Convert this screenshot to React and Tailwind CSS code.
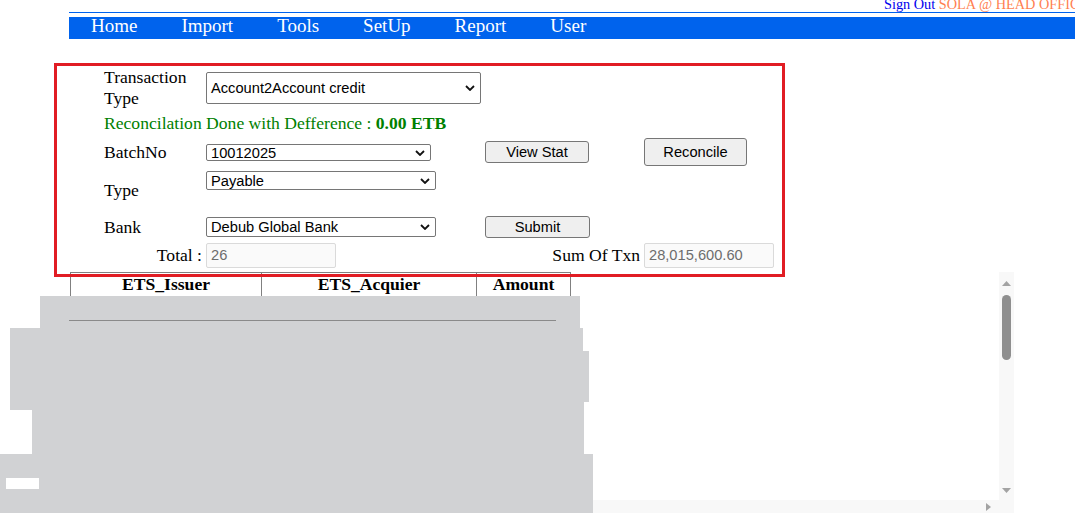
import React from 'react';

const Chevron = () => (
  <svg width="10" height="6" viewBox="0 0 10 6" className="shrink-0">
    <path d="M1 1l4 4 4-4" fill="none" stroke="#111" strokeWidth="1.8" />
  </svg>
);

const FakeSelect = ({ value, className }) => (
  <div
    className={`flex items-center justify-between border border-[#767676] rounded-[2px] bg-white pl-[4px] pr-[5px] font-['Liberation_Sans',sans-serif] text-[14.67px] leading-[16px] text-black ${className}`}
  >
    <span className="whitespace-nowrap">{value}</span>
    <Chevron />
  </div>
);

const Btn = ({ children, className }) => (
  <button
    className={`flex items-center justify-center border border-[#767676] rounded-[3px] bg-[#efefef] font-['Liberation_Sans',sans-serif] text-[14.67px] leading-[16px] text-black ${className}`}
  >
    {children}
  </button>
);

const ReadOnly = ({ value }) => (
  <div className="flex items-center w-[130px] h-[25px] border border-[#dadada] rounded-[2px] bg-[#fafafa] pl-[4px] font-['Liberation_Sans',sans-serif] text-[14.67px] text-[#6d6d6d]">
    {value}
  </div>
);

const navItems = ['Home', 'Import', 'Tools', 'SetUp', 'Report', 'User'];

export default function App() {
  return (
    <div className="relative w-[1075px] h-[522px] overflow-hidden bg-white font-['Liberation_Serif',serif] text-black">
      {/* Header */}
      <div className="h-[12px] pl-[884px] whitespace-nowrap text-[14.3px] leading-[8px]">
        <span className="text-[#0000ee]">Sign Out</span>{' '}
        <span className="text-[#ff7f50]">SOLA @ HEAD OFFICE</span>
      </div>
      <div className="ml-[69px] h-px bg-[#0063ed]" />
      <nav className="ml-[69px] mt-[4px] h-[22px] bg-[#0063ed] flex">
        {navItems.map((item) => (
          <span key={item} className="px-[22px] text-white text-[19px] leading-[18px]">
            {item}
          </span>
        ))}
      </nav>

      {/* Form */}
      <div className="pl-[104px] pt-[27px] text-[17.6px] leading-[21px]">
        <div className="flex items-center h-[43px]">
          <div className="w-[102px]">Transaction Type</div>
          <FakeSelect value="Account2Account credit" className="w-[275px] h-[32px]" />
        </div>

        <div className="mt-[4px] h-[21px] text-[#008000] whitespace-nowrap">
          Reconcilation Done with Defference : <b>0.00 ETB</b>
        </div>

        <div className="mt-[4px] flex items-center h-[28px]">
          <div className="w-[102px]">BatchNo</div>
          <FakeSelect value="10012025" className="w-[225px] h-[17px] pt-[2px]" />
          <Btn className="ml-[54px] w-[104px] h-[22px]">View Stat</Btn>
          <Btn className="ml-[55px] w-[103px] h-[28px]">Reconcile</Btn>
        </div>

        <div className="mt-[5px] flex items-start h-[31px]">
          <div className="w-[102px] mt-[9px]">Type</div>
          <FakeSelect value="Payable" className="w-[230px] h-[19px]" />
        </div>

        <div className="mt-[14px] flex items-center h-[22px]">
          <div className="w-[102px]">Bank</div>
          <FakeSelect value="Debub Global Bank" className="w-[230px] h-[20px]" />
          <Btn className="ml-[49px] w-[105px] h-[22px]">Submit</Btn>
        </div>

        <div className="mt-[5px] flex items-center h-[25px]">
          <div className="w-[102px] text-right pr-[4px]">Total :</div>
          <ReadOnly value="26" />
          <div className="w-[308px] text-right pr-[4px]">Sum Of Txn</div>
          <ReadOnly value="28,015,600.60" />
        </div>
      </div>

      {/* Result grid with scrollbars */}
      <div className="mt-[4px] w-[1014px] flex flex-col">
        <div className="flex h-[228px]">
          <div className="w-[999px]">
            <div className="ml-[70px] w-[501px] border border-[#808080] flex text-[17.6px] leading-[21px] font-bold">
              <div className="w-[190px] h-[23px] pt-[1px] text-center">ETS_Issuer</div>
              <div className="w-[215px] h-[23px] pt-[1px] text-center border-l border-[#808080]">ETS_Acquier</div>
              <div className="w-[94px] h-[23px] pt-[1px] text-center border-l border-[#808080]">Amount</div>
            </div>
          </div>
          <div className="w-[15px] h-[228px] bg-[#f8f8f8] flex flex-col items-center">
            <svg className="mt-[9px]" width="9" height="5" viewBox="0 0 9 5">
              <path d="M4.5 0L9 5H0z" fill="#a3a3a3" />
            </svg>
            <div className="mt-[9px] w-[9px] h-[65px] rounded-full bg-[#8f8f8f]" />
            <div className="flex-1" />
            <svg className="mb-[7px]" width="9" height="5" viewBox="0 0 9 5">
              <path d="M0 0h9L4.5 5z" fill="#a3a3a3" />
            </svg>
          </div>
        </div>
        <div className="flex h-[13px] bg-[#f8f8f8]">
          <div className="w-[999px] flex items-center justify-end pr-[8px]">
            <svg width="5" height="8" viewBox="0 0 5 8">
              <path d="M0 0l5 4-5 4z" fill="#a3a3a3" />
            </svg>
          </div>
        </div>
      </div>

      {/* Redactions over the data rows */}
      <div className="absolute left-[40px] top-[296px] w-[540px] h-[32px] bg-[#d1d2d4]" />
      <div className="absolute left-[10px] top-[328px] w-[573px] h-[23px] bg-[#d1d2d4]" />
      <div className="absolute left-[10px] top-[351px] w-[579px] h-[51px] bg-[#d1d2d4]" />
      <div className="absolute left-[10px] top-[402px] w-[574px] h-[8px] bg-[#d1d2d4]" />
      <div className="absolute left-[32px] top-[410px] w-[552px] h-[44px] bg-[#d1d2d4]" />
      <div className="absolute left-0 top-[454px] w-[593px] h-[59px] bg-[#d1d2d4]" />
      <div className="absolute left-[6px] top-[478px] w-[33px] h-[11px] bg-white" />
      <div className="absolute left-[69px] top-[320px] w-[487px] h-px bg-[#8a8a8a]" />

      {/* Highlight frame */}
      <div className="absolute left-[54px] top-[63px] w-[731px] h-[214px] border-[3px] border-[#e11d24]" />
    </div>
  );
}
